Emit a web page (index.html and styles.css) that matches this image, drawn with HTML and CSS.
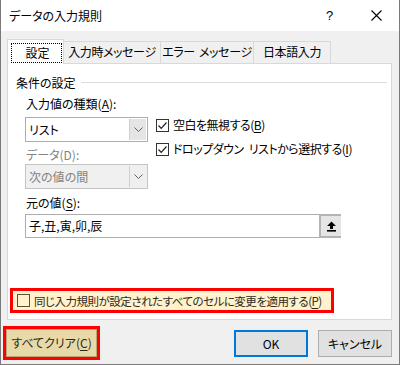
FILE: index.html
```html
<!DOCTYPE html>
<html lang="ja">
<head>
    <meta charset="UTF-8">
    <meta name="viewport" content="width=device-width, initial-scale=1.0">
    <title>データの入力規則</title>
    <link rel="stylesheet" href="styles.css">
</head>
<body>
    <div class="dialog">
        <div class="titlebar">
            <span class="title">データの入力規則</span>
            <span class="help">?</span>
            <span class="close">
                <svg width="11" height="11" viewBox="0 0 11 11"><path d="M0.5 0.5 L10.5 10.5 M10.5 0.5 L0.5 10.5" stroke="#000" stroke-width="1.1" fill="none"/></svg>
            </span>
        </div>

        <div class="content">
            <div class="tabs">
                <div class="tab active"><span class="focus">設定</span></div>
                <div class="tab tab-input">入力時メッセージ</div>
                <div class="tab tab-error">エラー メッセージ</div>
                <div class="tab tab-ime">日本語入力</div>
            </div>

            <div class="panel">
                <div class="group-title"><span>条件の設定</span></div>

                <div class="criteria">
                    <div class="col-left">
                        <div class="label">入力値の種類(<u>A</u>):</div>
                        <div class="combo">
                            <span class="combo-text">リスト</span>
                            <span class="combo-btn">
                                <svg width="9" height="5" viewBox="0 0 9 5"><path d="M0.5 0.5 L4.5 4.5 L8.5 0.5" stroke="#606060" fill="none"/></svg>
                            </span>
                        </div>
                        <div class="label label-disabled">データ(D):</div>
                        <div class="combo combo-disabled">
                            <span class="combo-text">次の値の間</span>
                            <span class="combo-btn">
                                <svg width="9" height="5" viewBox="0 0 9 5"><path d="M0.5 0.5 L4.5 4.5 L8.5 0.5" stroke="#606060" fill="none"/></svg>
                            </span>
                        </div>
                    </div>
                    <div class="col-right">
                        <div class="check">
                            <span class="box">
                                <svg width="11" height="11" viewBox="0 0 11 11"><path d="M1.5 5.5 L4.2 8.3 L9.5 2.5" stroke="#222" stroke-width="1.2" fill="none"/></svg>
                            </span>
                            空白を無視する(<u>B</u>)
                        </div>
                        <div class="check">
                            <span class="box">
                                <svg width="11" height="11" viewBox="0 0 11 11"><path d="M1.5 5.5 L4.2 8.3 L9.5 2.5" stroke="#222" stroke-width="1.2" fill="none"/></svg>
                            </span>
                            ドロップダウン リストから選択する(<u>I</u>)
                        </div>
                    </div>
                </div>

                <div class="label label-source">元の値(<u>S</u>):</div>
                <div class="ref-field">
                    <span class="ref-text">子,丑,寅,卯,辰</span>
                    <span class="ref-btn">
                        <svg width="11" height="11" viewBox="0 0 11 11"><path d="M5.5 0.5 L10 5 L7 5 L7 8 L4 8 L4 5 L1 5 Z" fill="#000"/><rect x="1" y="9" width="9" height="1.6" fill="#000"/></svg>
                    </span>
                </div>

                <div class="apply-all">
                    <span class="box box-plain"></span>
                    <span class="apply-text">同じ入力規則が設定されたすべてのセルに変更を適用する(<u>P</u>)</span>
                </div>
            </div>

            <div class="buttons">
                <div class="mark">
                    <div class="btn btn-clear">すべてクリア(<u>C</u>)</div>
                </div>
                <div class="btn btn-ok">OK</div>
                <div class="btn btn-cancel">キャンセル</div>
            </div>
        </div>
    </div>
</body>
</html>
```

FILE: styles.css
```css
* {
    margin: 0;
    padding: 0;
    box-sizing: border-box;
}

body {
    font-family: "Noto Sans CJK JP", "Noto Sans", sans-serif;
    font-feature-settings: "palt";
    font-size: 12px;
    line-height: 16px;
    color: #000;
    background: #fff;
}

u {
    text-decoration: underline;
    text-underline-offset: 2px;
}

.dialog {
    width: 400px;
    height: 365px;
    border: 1px solid #7a7a7a;
    border-top: none;
    background: #f0f0f0;
    display: flex;
    flex-direction: column;
}

/* title bar */

.titlebar {
    height: 31px;
    background: #fff;
    display: flex;
    align-items: center;
    padding-left: 8px;
}

.title {
    flex: 1;
    font-size: 12px;
}

.help {
    width: 12px;
    margin-right: 33px;
    font-family: "Liberation Sans", sans-serif;
    font-size: 13px;
}

.close {
    display: flex;
    margin-right: 17px;
}

/* tabs */

.content {
    padding: 8px 7px 0 6px;
    flex: 1;
    display: flex;
    flex-direction: column;
}

.tabs {
    display: flex;
    align-items: flex-end;
    height: 24px;
    position: relative;
    z-index: 1;
}

.tab {
    height: 22px;
    border: 1px solid #d9d9d9;
    border-bottom: none;
    background: #f0f0f0;
    margin-left: -1px;
    display: flex;
    justify-content: center;
    align-items: center;
    padding-bottom: 1px;
    letter-spacing: -0.4px;
    word-spacing: 2px;
}

.tab.active {
    margin-left: 0;
    width: 57px;
    height: 25px;
    background: #fff;
    margin-bottom: -1px;
    justify-content: flex-end;
    align-items: flex-start;
    padding: 3px 1px 0 0;
    position: relative;
    z-index: 2;
    letter-spacing: 0;
}

.focus {
    width: 51px;
    height: 20px;
    border: 1px dotted #000;
    display: flex;
    justify-content: center;
    align-items: center;
    padding-left: 2px;
}

.tab-input {
    width: 98px;
}

.tab-error {
    width: 94px;
}

.tab-ime {
    width: 78px;
}

/* panel */

.panel {
    height: 257px;
    border: 1px solid #d9d9d9;
    background: #fff;
    display: flex;
    flex-direction: column;
    padding: 11px 0 6px 0;
}

.group-title {
    display: flex;
    align-items: center;
    padding-left: 8px;
    margin-right: 4px;
}

.group-title::after {
    content: "";
    flex: 1;
    height: 1px;
    background: #dcdcdc;
    margin-left: 5px;
    margin-top: -2px;
}

.criteria {
    display: flex;
    margin-top: 5px;
    padding-left: 17px;
    gap: 8px;
}

.col-left {
    width: 123px;
    display: flex;
    flex-direction: column;
}

.label {
    padding-left: 1px;
}

.label-disabled {
    color: #838383;
    margin-top: 5px;
}

.combo {
    height: 25px;
    margin-top: 5px;
    border: 1px solid #adadad;
    background: #fff;
    display: flex;
}

.combo-disabled {
    margin-top: 1px;
    background: #f0f0f0;
    border-color: #c4c4c4;
    color: #838383;
}

.combo-text {
    flex: 1;
    padding-left: 3px;
    display: flex;
    align-items: center;
}

.combo-btn {
    width: 17px;
    margin: 1px;
    background: #e5e5e5;
    border-left: 1px solid #cfcfcf;
    display: flex;
    justify-content: center;
    align-items: center;
}

.combo-disabled .combo-btn {
    background: #efefef;
}

.col-right {
    padding-top: 17px;
}

.check {
    height: 24px;
    display: flex;
    align-items: center;
    white-space: nowrap;
    letter-spacing: -0.5px;
    word-spacing: 3px;
}

.box {
    width: 13px;
    height: 13px;
    border: 1px solid #333;
    background: #fff;
    margin-right: 4px;
    flex-shrink: 0;
    display: flex;
    justify-content: center;
    align-items: center;
}

.label-source {
    margin-top: 6px;
    padding-left: 18px;
}

.ref-field {
    margin: 3px 0 0 17px;
    width: 316px;
    height: 24px;
    border: 1px solid #adadad;
    display: flex;
}

.ref-text {
    flex: 1;
    padding-left: 3px;
    display: flex;
    align-items: center;
}

.ref-btn {
    width: 22px;
    background: #e5e5e5;
    border: 2px solid #b4b4b4;
    border-right: none;
    margin: -1px -1px -1px 0;
    display: flex;
    justify-content: center;
    align-items: center;
}

.apply-all {
    margin: auto 0 0 2px;
    width: 324px;
    height: 25px;
    border: 3px solid #f00;
    background: #fff2cc;
    color: #2d2a1e;
    display: flex;
    align-items: center;
    padding-left: 4px;
    white-space: nowrap;
}

.apply-text {
    font-size: 11.5px;
    letter-spacing: -0.5px;
}

.box-plain {
    background: #fff2cc;
    border-color: #5a5236;
}

/* buttons */

.buttons {
    display: flex;
    align-items: center;
    margin-top: 6px;
    margin-left: -4px;
}

.mark {
    border: 3px solid #f00;
    margin-right: auto;
}

.btn {
    width: 74px;
    height: 27px;
    border: 1px solid #adadad;
    background: #e1e1e1;
    display: flex;
    justify-content: center;
    align-items: center;
    white-space: nowrap;
}

.btn-clear {
    width: 91px;
    height: 28px;
    background: #e8d9a9;
    border-color: #b8a878;
    color: #2d2a1e;
}

.btn-ok {
    border: 2px solid #0078d7;
    margin-right: 10px;
    margin-top: 1px;
}

.btn-cancel {
    margin-top: 1px;
}
```
